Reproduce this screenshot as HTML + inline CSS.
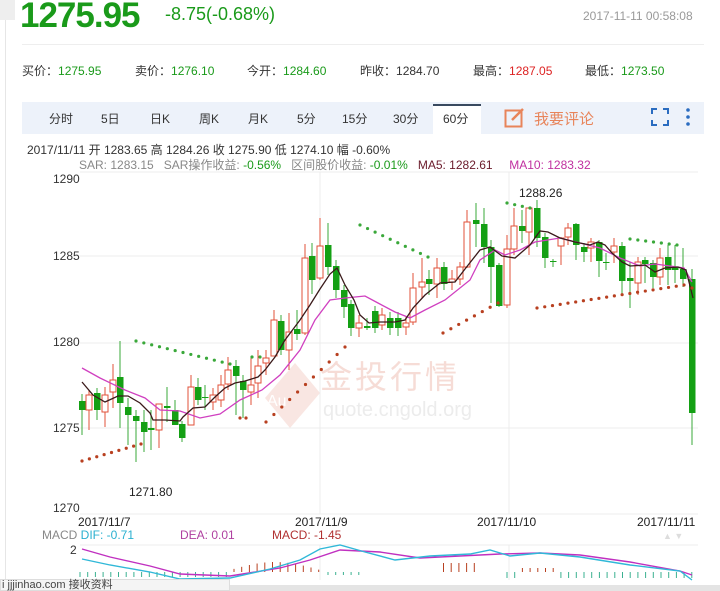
<!DOCTYPE html>
<html><head><meta charset="utf-8">
<style>
*{margin:0;padding:0;box-sizing:border-box}
body{width:720px;height:591px;overflow:hidden;background:#fff;font-family:"Liberation Sans","Noto Sans CJK SC",sans-serif;position:relative}
.abs{position:absolute;white-space:nowrap}
</style></head><body>
<div class="abs" style="left:0;top:0;width:15px;height:20px;background:#eee"></div>
<div class="abs" style="left:5px;top:20px;width:1px;height:560px;background:#e6e6e6"></div>
<div class="abs" style="left:20px;top:-4px;font-size:35px;font-weight:bold;color:#1a9a1a;letter-spacing:-1px">1275.95</div>
<div class="abs" style="left:165px;top:4px;font-size:18px;color:#1a9a1a">-8.75(-0.68%)</div>
<div class="abs" style="left:583px;top:9px;font-size:12px;color:#999">2017-11-11 00:58:08</div>
<div class="abs" style="left:22px;top:44px;width:682px;height:1px;background:#eee"></div>
<div class="abs" style="top:62px;font-size:12px;color:#333;left:22px">买价：<span style="color:#1a9a1a">1275.95</span></div>
<div class="abs" style="top:62px;font-size:12px;color:#333;left:135px">卖价：<span style="color:#1a9a1a">1276.10</span></div>
<div class="abs" style="top:62px;font-size:12px;color:#333;left:247px">今开：<span style="color:#1a9a1a">1284.60</span></div>
<div class="abs" style="top:62px;font-size:12px;color:#333;left:360px">昨收：<span>1284.70</span></div>
<div class="abs" style="top:62px;font-size:12px;color:#333;left:473px">最高：<span style="color:#d22">1287.05</span></div>
<div class="abs" style="top:62px;font-size:12px;color:#333;left:585px">最低：<span style="color:#1a9a1a">1273.50</span></div>
<div class="abs" style="left:22px;top:102px;width:682px;height:32px;background:#edf2fa"></div>
<div class="abs" style="left:433px;top:104px;width:48px;height:30px;background:#fff;border-top:2px solid #3a4a60"></div>
<div class="abs" style="top:110px;font-size:12px;color:#333;left:49px">分时</div>
<div class="abs" style="top:110px;font-size:12px;color:#333;left:101px">5日</div>
<div class="abs" style="top:110px;font-size:12px;color:#333;left:150px">日K</div>
<div class="abs" style="top:110px;font-size:12px;color:#333;left:199px">周K</div>
<div class="abs" style="top:110px;font-size:12px;color:#333;left:248px">月K</div>
<div class="abs" style="top:110px;font-size:12px;color:#333;left:297px">5分</div>
<div class="abs" style="top:110px;font-size:12px;color:#333;left:342px">15分</div>
<div class="abs" style="top:110px;font-size:12px;color:#333;left:393px">30分</div>
<div class="abs" style="top:110px;font-size:12px;color:#333;left:443px">60分</div>
<svg class="abs" style="left:504px;top:107px" width="22" height="22"><rect x="1.5" y="3.5" width="16" height="16" fill="none" stroke="#e8845a" stroke-width="2"/><path d="M8 13 L19 2" stroke="#e8845a" stroke-width="2.5"/></svg>
<div class="abs" style="top:108px;font-size:15px;color:#e8845a;left:534px">我要评论</div>
<svg class="abs" style="left:651px;top:108px" width="18" height="18"><path d="M1 6V1H6M12 1H17V6M17 12V17H12M6 17H1V12" fill="none" stroke="#2a6cc0" stroke-width="2"/></svg>
<svg class="abs" style="left:685px;top:107px" width="6" height="20"><circle cx="3" cy="3" r="1.8" fill="#2a6cc0"/><circle cx="3" cy="10" r="1.8" fill="#2a6cc0"/><circle cx="3" cy="17" r="1.8" fill="#2a6cc0"/></svg>
<div class="abs" style="top:141px;font-size:12px;color:#333;left:27px">2017/11/11 开 1283.65 高 1284.26 收 1275.90 低 1274.10 幅 -0.60%</div>
<div class="abs" style="top:156px;font-size:12px;color:#888;left:79px">SAR: 1283.15 &nbsp;&nbsp;SAR操作收益: <span style="color:#1a9a1a">-0.56%</span> &nbsp;&nbsp;区间股价收益: <span style="color:#1a9a1a">-0.01%</span> &nbsp;&nbsp;<span style="color:#6a1a2a">MA5: 1282.61</span> &nbsp;&nbsp;&nbsp;&nbsp;<span style="color:#c030a0">MA10: 1283.32</span></div>
<div class="abs" style="left:53px;top:172px;font-size:12px;color:#333">1290</div>
<div class="abs" style="left:53px;top:249px;font-size:12px;color:#333">1285</div>
<div class="abs" style="left:53px;top:335px;font-size:12px;color:#333">1280</div>
<div class="abs" style="left:53px;top:421px;font-size:12px;color:#333">1275</div>
<div class="abs" style="left:53px;top:501px;font-size:12px;color:#333">1270</div>
<div class="abs" style="left:129px;top:485px;font-size:12px;color:#222">1271.80</div>
<div class="abs" style="left:519px;top:186px;font-size:12px;color:#222">1288.26</div>
<svg class="abs" style="left:255px;top:358px" width="70" height="75"><path d="M10 40 L40 5 L65 35 L35 70 Z" fill="#f9e6e2"/><text x="12" y="48" font-size="16" fill="#fff" font-family="Liberation Sans">Au</text></svg>
<div class="abs" style="left:320px;top:352px;font-size:32px;color:#f6dcd6;letter-spacing:3px">金投行情</div>
<div class="abs" style="left:323px;top:399px;font-size:20px;color:#ececec">quote.cngold.org</div>
<div class="abs" style="left:78px;top:515px;font-size:12px;color:#222">2017/11/7</div>
<div class="abs" style="left:295px;top:515px;font-size:12px;color:#222">2017/11/9</div>
<div class="abs" style="left:477px;top:515px;font-size:12px;color:#222">2017/11/10</div>
<div class="abs" style="left:637px;top:515px;font-size:12px;color:#222">2017/11/11</div>
<div class="abs" style="top:528px;font-size:12px;left:42px;color:#888">MACD <span style="color:#2ab0d0">DIF: -0.71</span></div>
<div class="abs" style="top:528px;font-size:12px;left:180px;color:#b040a0">DEA: 0.01</div>
<div class="abs" style="top:528px;font-size:12px;left:272px;color:#b03030">MACD: -1.45</div>
<div class="abs" style="top:531px;font-size:9px;left:663px;color:#ddd">▲ ▼</div>
<div class="abs" style="left:70px;top:543px;font-size:12px;color:#333">2</div>
<svg id="ch" class="abs" style="left:0;top:0" width="720" height="591"></svg>
<div class="abs" style="left:0;top:585px;width:720px;height:6px;background:#e4e4e4"></div>
<div class="abs" style="left:0;top:579px;width:230px;height:12px;background:#f4f4f4;border:1px solid #ddd;font-size:11px;color:#444;line-height:11px;padding-left:1px">i jjjinhao.com 接收资料</div>
<script>
var s='';
function L(x1,y1,x2,y2,c,w){s+='<line x1="'+x1+'" y1="'+y1+'" x2="'+x2+'" y2="'+y2+'" stroke="'+c+'" stroke-width="'+(w||1)+'"/>';}
[172,256,343,428,514].forEach(function(y){L(80,y,698,y,'#ececec');});
[320,509].forEach(function(x){L(x,172,x,514,'#ececec');L(x,545,x,580,'#ececec');});
L(80,545,698,545,'#ececec');
var C=[[82,'G',401,410,394,435],[89,'R',395,410,390,430],[97,'G',393,410,388,420],[105,'R',395,412,387,427],[113,'R',380,392,364,408],[120,'G',377,403,341,428],[128,'G',407,415,398,445],[136,'G',416,421,410,462],[144,'G',422,432,410,452],[151,'G',428,430,410,450],[159,'R',404,430,404,448],[167,'G',406,408,387,422],[175,'G',410,425,400,425],[182,'G',424,438,421,442],[191,'R',387,425,375,425],[198,'G',387,400,378,405],[205,'G',397,398,385,410],[213,'R',395,402,388,410],[221,'R',385,400,375,407],[228,'R',370,384,357,390],[236,'G',366,376,360,415],[243,'G',381,390,375,418],[251,'R',385,392,358,405],[258,'R',366,383,350,398],[266,'R',358,363,350,375],[274,'R',320,356,310,356],[281,'G',321,350,315,355],[289,'R',332,350,313,370],[297,'G',329,334,310,340],[305,'R',258,333,244,335],[312,'G',256,280,243,294],[320,'R',246,278,218,280],[328,'G',245,267,223,275],[336,'G',266,290,260,298],[344,'G',290,307,285,318],[351,'G',304,328,300,336],[359,'R',323,328,315,337],[367,'G',326,328,318,330],[375,'G',311,328,306,333],[382,'R',315,325,308,330],[390,'G',318,328,312,335],
[398,'G',318,328,312,336],[406,'R',323,327,316,335],[413,'R',288,322,273,325],[422,'R',282,287,258,298],[429,'G',279,284,270,295],[437,'R',268,284,258,298],[444,'G',267,284,262,290],[452,'R',279,282,270,290],[460,'R',267,279,262,285],[467,'R',222,267,210,268],[476,'G',220,224,203,247],[484,'G',224,247,208,263],[491,'G',247,267,240,303],[499,'G',265,306,263,307],[507,'R',249,305,235,308],[514,'R',226,249,208,255],[522,'G',226,231,210,243],[529,'R',208,232,207,255],[537,'G',208,238,200,247],[545,'G',237,258,233,268],[553,'G',261,262,259,267],[561,'R',238,246,237,265],[568,'R',228,237,223,245],[576,'G',224,245,223,260],[584,'G',247,252,243,262],[591,'R',242,248,238,262],[599,'G',242,261,240,277],[606,'G',262,263,253,270],[614,'R',246,252,238,263],[622,'G',246,281,242,295],[630,'G',278,281,262,308],[638,'R',262,283,257,295],[645,'G',260,264,257,283],[653,'G',263,277,260,288],[660,'R',258,277,248,285],[668,'G',257,270,245,285],[675,'G',267,270,245,283],[683,'G',269,279,248,287],[692,'G',279,413,269,445]];
C.forEach(function(c){var col=c[1]=='G'?'#3aa83a':'#e0503a';L(c[0],c[4],c[0],c[5],col);var h=Math.max(1,c[3]-c[2]);
if(c[1]=='G')s+='<rect x="'+(c[0]-3)+'" y="'+c[2]+'" width="6.5" height="'+h+'" fill="#14a014"/>';
else s+='<rect x="'+(c[0]-3)+'" y="'+c[2]+'" width="6" height="'+h+'" fill="#fff" stroke="#e0503a"/>';});
function P(pts,c,w){s+='<polyline fill="none" stroke="'+c+'" stroke-width="'+w+'" points="'+pts.map(function(p){return p.join(',')}).join(' ')+'"/>';}
P([[82,368],[100,378],[125,390],[145,398],[160,410],[180,411],[200,418],[220,414],[240,400],[262,390],[280,375],[300,350],[315,320],[330,300],[345,298],[365,296],[378,303],[395,312],[410,318],[425,310],[445,300],[470,280],[480,260],[495,250],[505,255],[520,250],[535,242],[560,238],[580,243],[600,248],[620,258],[640,266],[655,264],[670,266],[684,268],[692,282]],'#d040c0',1.3);
P([[82,382],[93,395],[105,402],[118,396],[128,396],[140,403],[150,413],[153,420],[165,420],[180,421],[183,417],[193,408],[205,407],[215,397],[225,388],[235,383],[245,381],[258,377],[265,370],[275,357],[285,340],[300,320],[310,305],[320,289],[330,274],[337,268],[345,285],[354,300],[360,315],[369,323],[380,322],[395,322],[405,320],[413,308],[425,295],[440,283],[455,282],[465,269],[480,250],[490,247],[502,256],[515,258],[530,245],[540,231],[548,232],[560,238],[575,242],[590,245],[598,242],[605,245],[612,253],[622,262],[630,266],[645,265],[655,272],[665,268],[678,267],[686,270],[693,298]],'#3a1a1a',1.3);
function D(x1,y1,x2,y2,c){var n=Math.round((x2-x1)/7.7);for(var i=0;i<=n;i++){var t=n?i/n:0;s+='<circle cx="'+(x1+(x2-x1)*t)+'" cy="'+(y1+(y2-y1)*t)+'" r="1.6" fill="'+c+'"/>';}}
var g='#3aa83a',r='#b84020';
D(136,341,230,364,g);D(252,357,260,357,g);D(360,225,428,257,g);D(507,203,530,208,g);D(630,239,677,245,g);
D(82,461,141,444,r);D(240,418,246,418,r);D(266,422,345,347,r);D(443,333,498,303,r);D(537,308,684,285,r);D(692,288,692,288,r);
for(var x=80;x<=320;x+=7.7){var h=x>160&&x<230?-2:(x>230?-8*Math.sin((x-230)/90*3.14):3);if(x<230)L(x,572,x,577,'#3ab090');else L(x,572,x,572-Math.abs(h)-2,'#b84020');}
for(var x=328;x<=500;x+=7.7){L(x,572,x,x>440&&x<480?563:(x<360?575:572),x>440&&x<480?'#b84020':'#3ab090');}
for(var x=507;x<=692;x+=7.7){L(x,572,x,x>520&&x<560?568:578,x>520&&x<560?'#b84020':'#3ab090');}
P([[82,549],[110,557],[150,566],[180,574],[230,576],[280,568],[310,560],[340,550],[380,552],[420,558],[460,556],[500,554],[540,553],[580,555],[630,562],[680,571],[692,575]],'#c030c0',1.4);
P([[82,559],[110,565],[150,572],[180,579],[230,578],[270,569],[300,560],[320,549],[340,545],[365,552],[395,560],[430,556],[470,554],[490,550],[510,556],[540,553],[580,557],[630,565],[680,571],[692,580]],'#30b8d8',1.4);
document.getElementById('ch').innerHTML=s;
</script>
</body></html>
